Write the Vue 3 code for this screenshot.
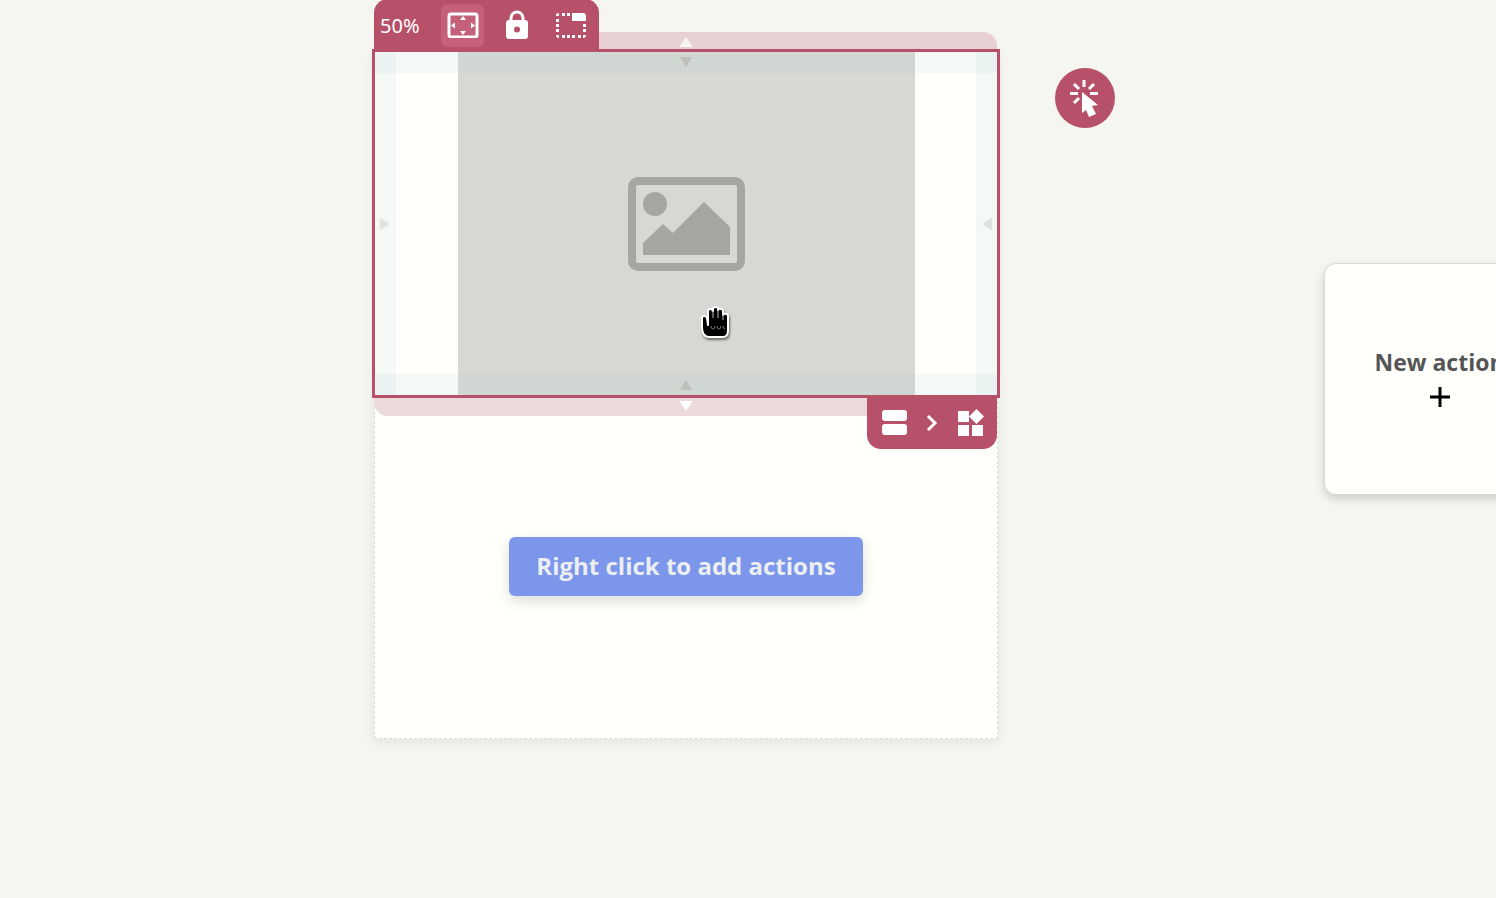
<script setup>
const zones = ['top', 'bottom', 'left', 'right']
</script>

<template>
  <main class="canvas">
    <section class="screen" aria-label="Screen">
      <div class="slot selected">
        <div class="margin margin-top"><svg viewBox="0 0 14 10"><path d="M7 0L14 10H0Z" /></svg></div>
        <div class="margin margin-bottom"><svg viewBox="0 0 14 10"><path d="M0 0H14L7 10Z" /></svg></div>

        <div class="picture">
          <svg viewBox="0 0 118 96" role="img" aria-label="Image placeholder">
            <rect x="5" y="5" width="109" height="86" rx="6" fill="none" stroke="#a5a6a1" stroke-width="8" />
            <circle cx="28" cy="28" r="12" />
            <path d="M16 67L36 48L46 57L77 26L103 51V79H16Z" />
          </svg>
        </div>

        <div v-for="zone in zones" :key="zone" class="zone" :class="zone">
          <svg viewBox="0 0 12 10"><path d="M0 0H12L6 10Z" /></svg>
        </div>

        <div class="outline"></div>

        <div class="toolbar">
          <span class="percent">50%</span>
          <button class="tool active" aria-label="Fit to area">
            <svg width="32" height="26" viewBox="0 0 32 26">
              <rect x="2" y="2" width="28" height="23" rx="2" fill="none" stroke="#fff" stroke-width="3" />
              <path d="M16 4L19 8H13ZM16 23L13 19H19ZM4 13.500L8 10.500V16.500ZM28 13.500L24 10.500V16.500Z" />
            </svg>
          </button>
          <button class="tool" aria-label="Lock">
            <svg width="24" height="30" viewBox="0 0 24 30">
              <path d="M6 11V8A6 6 0 0 1 18 8V11" fill="none" stroke="#fff" stroke-width="3" />
              <path fill-rule="evenodd" d="M4 10H20Q23 10 23 13V26Q23 29 20 29H4Q1 29 1 26V13Q1 10 4 10ZM12 16.500A3 3 0 1 0 12 22.500A3 3 0 1 0 12 16.500Z" />
            </svg>
          </button>
          <button class="tool" aria-label="Corner placement">
            <svg width="32" height="26" viewBox="0 0 32 26">
              <path d="M1 3Q1 1 4 1V4H1ZM7 1H10V4H7ZM12 1H15V4H12ZM1 7H4V10H1ZM1 12H4V15H1ZM1 17H4V20H1ZM1 23H4V26Q1 26 1 23ZM7 23H10V26H7ZM12 23H15V26H12ZM17 23H20V26H17ZM23 23H26V26H23ZM28 23H31Q31 26 28 26ZM28 17H31V20H28ZM28 12H31V15H28ZM17 1H28Q31 1 31 4V9H17Z" />
            </svg>
          </button>
        </div>

        <nav class="crumbs" aria-label="Selection path">
          <button class="crumb" aria-label="Rows">
            <svg width="26" height="26" viewBox="0 0 26 26"><rect x="1" y="0" width="25" height="11" rx="3" /><rect x="1" y="14" width="25" height="11" rx="3" /></svg>
          </button>
          <svg width="12" height="18" viewBox="0 0 12 18"><path d="M2 2L9 9L2 16" fill="none" stroke="#fff" stroke-width="3" /></svg>
          <button class="crumb" aria-label="Widget">
            <svg width="28" height="28" viewBox="0 0 28 28"><path d="M1 2H12V13H1ZM1 16H12V27H1ZM15 16H26V27H15ZM19.500 0L27 7.500L19.500 15L12 7.500Z" /></svg>
          </button>
        </nav>
      </div>

      <div class="slot">
        <button class="primary">Right click to add actions</button>
      </div>
    </section>

    <button class="pin" aria-label="Click action">
      <svg width="30" height="38" viewBox="0 0 30 38">
        <path d="M14 1V8M0 14.500H8M20 14.500H28M4 5L9 10M24 5L19 10M4 24L9 19" fill="none" stroke="#fff" stroke-width="3" />
        <path d="M12 13L28 26L22 27L26 35L19 38L16 31L12 34Z" />
      </svg>
    </button>

    <button class="card">
      <span>New action</span>
      <svg width="20" height="20" viewBox="0 0 20 20"><path d="M10 0V20M0 10H20" fill="none" stroke="#000" stroke-width="3" /></svg>
    </button>

    <svg class="cursor" viewBox="0 0 36 38" aria-hidden="true">
      <path d="M4 13Q4 11 6 11Q8 11 9 13L10 20V6Q10 4 12 4Q14 4 15 6V4Q15 2 18 2Q20 2 20 4V5Q21 3 23 4Q25 4 25 6V10Q26 8 28 9Q30 9 30 11V25Q30 32 25 32H11Q7 32 5 28Q4 25 4 22Z" fill="#000" stroke="#fff" stroke-width="2" stroke-linejoin="round" />
      <path d="M15 6V13M20 5V13M25 9V15" stroke="#bbb" stroke-width="1" fill="none" />
      <path d="M13 21Q13 24 15 24Q17 24 17 21M19 21Q19 24 21 24Q23 24 23 21M25 21Q25 24 27 24" stroke="#777" fill="none" />
    </svg>
  </main>
</template>

<style>
body {
  margin: 0;
  background: #f5f6f2;
}
</style>

<style scoped>
.canvas {
  position: relative;
  min-height: 100vh;
  overflow: hidden;
  background: #f5f6f2;
  font-family: "Open Sans", "Noto Sans", sans-serif;
}
button {
  font: inherit;
  color: inherit;
  border: 0;
  padding: 0;
  background: none;
  cursor: pointer;
}
svg {
  display: block;
  fill: #fff;
}
.screen {
  position: absolute;
  left: 374px;
  top: 51px;
  box-sizing: border-box;
  width: 624px;
  display: grid;
  grid-template-rows: 345px 343px;
  background: #fffffc;
  outline: 1px dashed #dcddd9;
  outline-offset: -1px;
  box-shadow: 0 3px 12px rgba(0, 0, 0, 0.08);
}
.slot {
  position: relative;
  display: flex;
  align-items: center;
  justify-content: center;
}
.picture {
  width: 457px;
  height: 100%;
  display: flex;
  align-items: center;
  justify-content: center;
  background: #d7d8d3;
}
.picture svg {
  width: 118px;
  fill: #a5a6a1;
}
.zone {
  position: absolute;
  display: flex;
  align-items: center;
  justify-content: center;
  background: rgba(150, 198, 200, 0.1);
}
.zone svg {
  width: 12px;
  fill: rgba(175, 165, 160, 0.5);
}
.zone.top,
.zone.bottom {
  left: 0;
  right: 0;
  height: 22px;
}
.zone.left,
.zone.right {
  top: 0;
  bottom: 0;
  width: 22px;
}
.zone.top { top: 0; }
.zone.bottom { bottom: 0; }
.zone.left { left: 0; }
.zone.right { right: 0; }
.zone.bottom svg { transform: rotate(180deg); }
.zone.left svg { transform: rotate(-90deg); }
.zone.right svg { transform: rotate(90deg); }
.zone.left svg,
.zone.right svg {
  fill: rgba(190, 190, 185, 0.4);
}
.margin {
  position: absolute;
  left: 0;
  right: 1px;
  height: 19px;
  display: flex;
  align-items: center;
  justify-content: center;
}
.margin svg {
  width: 14px;
}
.margin-top {
  bottom: 100%;
  background: #e7d0d3;
  border-radius: 14px 14px 0 0;
}
.margin-top svg {
  fill: #f7f5f2;
}
.margin-bottom {
  top: 100%;
  height: 20px;
  background: #ecd9db;
  border-radius: 0 0 14px 14px;
}
.outline {
  position: absolute;
  inset: -2px;
  border: 3px solid #b75069;
}
.toolbar {
  position: absolute;
  left: 0;
  bottom: 100%;
  box-sizing: border-box;
  width: 225px;
  height: 52px;
  padding: 0 6px;
  display: flex;
  align-items: center;
  background: #b75069;
  border-radius: 14px 14px 0 0;
  color: #fff;
}
.percent {
  flex: none;
  width: 61px;
  font-family: "Noto Sans", sans-serif;
  font-size: 20px;
}
.tool {
  flex: none;
  width: 43px;
  height: 43px;
  margin-right: 11px;
  display: flex;
  align-items: center;
  justify-content: center;
  border-radius: 6px;
}
.tool.active {
  background: #c5607a;
}
.crumbs {
  position: absolute;
  right: 1px;
  top: 100%;
  box-sizing: border-box;
  width: 130px;
  height: 53px;
  padding: 0 12px 0 14px;
  display: flex;
  align-items: center;
  justify-content: space-between;
  background: #b75069;
  border-radius: 0 0 14px 14px;
}
.primary {
  margin-bottom: 2px;
  padding: 14px 27px 15px;
  background: #7b96eb;
  border-radius: 6px;
  box-shadow: 0 5px 14px rgba(0, 0, 0, 0.14);
  color: #eceff2;
  font-size: 24px;
  line-height: 30px;
  font-weight: 700;
  white-space: nowrap;
}
.pin {
  position: absolute;
  left: 1055px;
  top: 68px;
  width: 60px;
  height: 60px;
  display: flex;
  align-items: center;
  justify-content: center;
  border-radius: 50%;
  background: #b75069;
}
.card {
  position: absolute;
  left: 1324px;
  top: 263px;
  box-sizing: border-box;
  width: 231px;
  height: 232px;
  padding-bottom: 4px;
  display: flex;
  flex-direction: column;
  align-items: center;
  justify-content: center;
  gap: 10px;
  background: #fffffc;
  border: 1px solid #d8d9d5;
  border-radius: 12px;
  box-shadow: 0 4px 10px rgba(0, 0, 0, 0.16);
  color: #555;
  font-size: 23px;
  line-height: 30px;
  font-weight: 700;
}
.cursor {
  position: absolute;
  left: 698px;
  top: 305px;
  width: 36px;
  height: 38px;
  filter: drop-shadow(1px 2px 1px rgba(0, 0, 0, 0.5));
}
</style>
